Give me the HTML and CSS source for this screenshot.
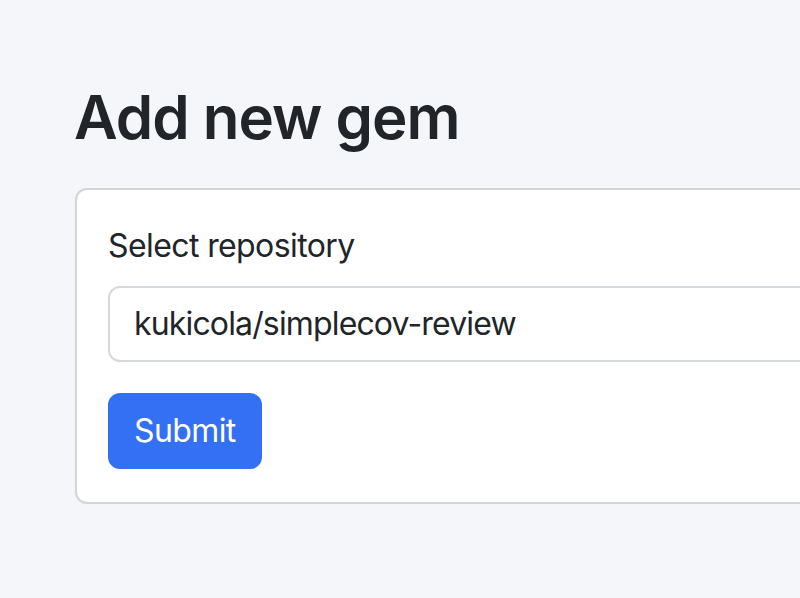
FILE: index.html
```html
<!DOCTYPE html>
<html lang="en">
<head>
<meta charset="utf-8">
<title>Add new gem</title>
<link rel="stylesheet" href="styles.css">
</head>
<body>
<main class="container">
  <h1 class="title">Add new gem</h1>
  <form class="card">
    <label class="form-label" for="repo">Select repository</label>
    <div class="select" id="repo">kukicola/simplecov-review</div>
    <button class="btn" type="button">Submit</button>
  </form>
</main>
</body>
</html>
```
FILE: styles.css
```css
html, body {
  margin: 0;
  padding: 0;
}
body {
  background: #f5f6fa;
  color: #212529;
  font-family: Inter, "Noto Sans", "Liberation Sans", sans-serif;
  font-size: 32px;
  line-height: 48px;
  letter-spacing: -0.6px;
  overflow: hidden;
  height: 598px;
}
.container {
  padding: 84px 0 0 75px;
}
.title {
  margin: 0 0 37px -1px;
  font-size: 60px;
  font-weight: 600;
  line-height: 67px;
  letter-spacing: -1px;
}
.card {
  display: flex;
  flex-direction: column;
  align-items: flex-start;
  background: #fff;
  border: 2px solid #d3d4d6;
  border-right: none;
  border-radius: 12px 0 0 12px;
  padding: 32px 0 33px 31px;
  width: 900px;
}
.form-label {
  margin-bottom: 16px;
}
.select {
  box-sizing: border-box;
  width: 100%;
  height: 76px;
  padding: 12px 24px;
  border: 2px solid #d6d9dc;
  border-right: none;
  border-radius: 12px 0 0 12px;
  margin-bottom: 31px;
  letter-spacing: -0.85px;
}
.btn {
  font: inherit;
  letter-spacing: inherit;
  line-height: 48px;
  color: #fff;
  background: #3370f3;
  border: 2px solid #3370f3;
  border-radius: 12px;
  padding: 12px 24px;
}
```
